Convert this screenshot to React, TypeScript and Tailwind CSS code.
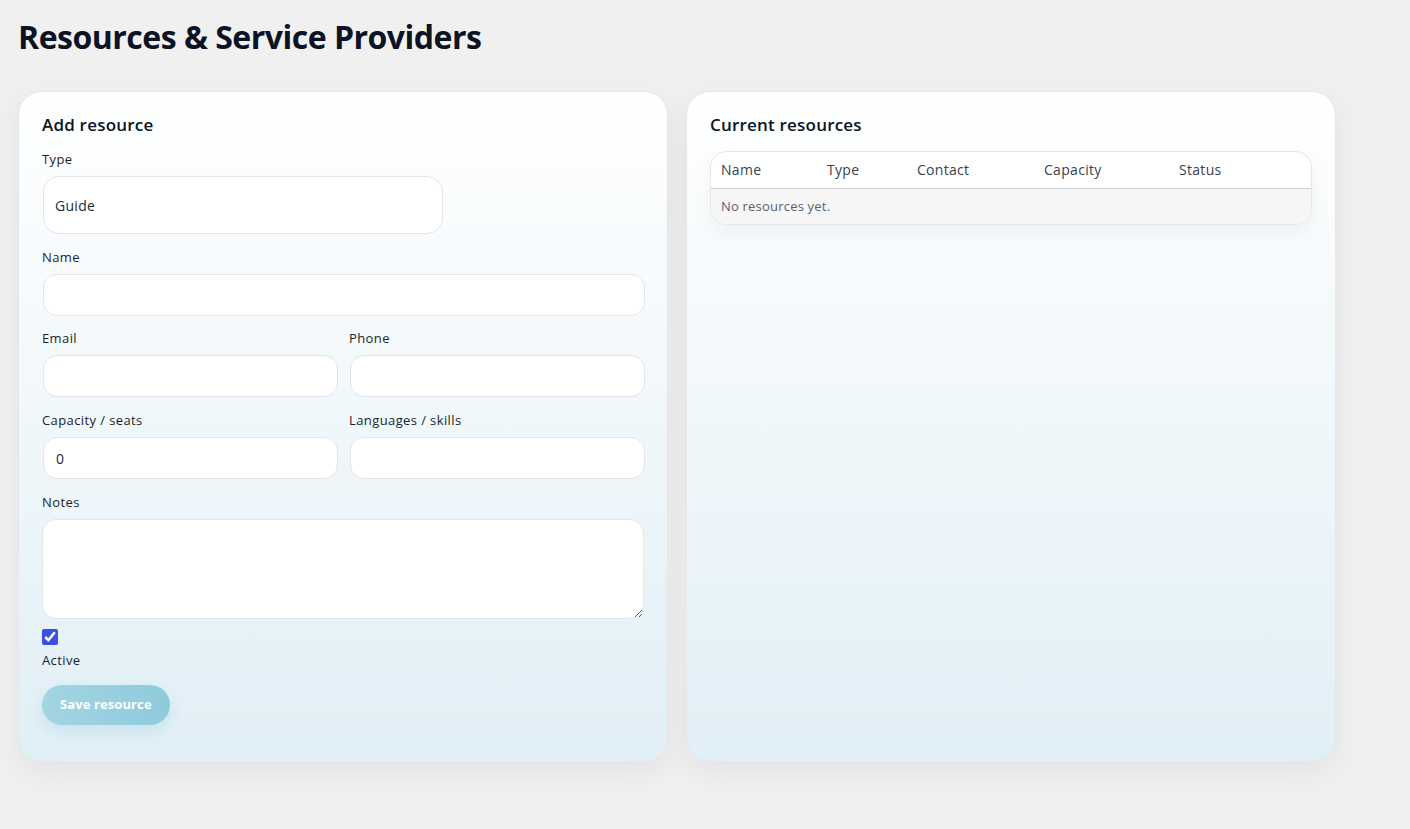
export default function App() {
  const inputCls =
    "block w-full rounded-[14px] border border-[#dfe6ee] bg-white px-3 text-[14px] text-[#1f2937] outline-none";
  const labelCls = "block text-[13px] leading-[20px] tracking-[0.4px] text-[#1a1f2b] mb-[7px]";

  return (
    <div className="min-h-[829px] bg-[#f0f0f0] px-[18px] pt-[17px] font-['Open_Sans',sans-serif] text-[#0f172a]">
      <h1 className="text-[32px] font-bold tracking-[-0.5px] leading-[40px] text-[#0b1324]">
        Resources &amp; Service Providers
      </h1>

      <div className="mt-[34px] flex gap-[18px]">
        {/* Add resource */}
        <section className="w-[650px] h-[671px] rounded-[24px] border border-[#e3e8ee] bg-gradient-to-b from-white to-[#e1eff6] px-[23px] pt-[22px] shadow-[0_10px_30px_rgba(0,0,0,0.06)]">
          <h2 className="text-[17px] font-semibold leading-[22px] tracking-[0.2px] text-[#0b1324]">Add resource</h2>

          <label className={labelCls + " mt-[13px]"}>Type</label>
          <div className="ml-[1px] flex h-[58px] w-[400px] items-center rounded-[16px] border border-[#dfe6ee] bg-white px-[11px] text-[14px] tracking-[0.3px] text-[#1f2937]">
            Guide
          </div>

          <label className={labelCls + " mt-[13px]"}>Name</label>
          <input className={inputCls + " ml-[1px] h-[42px] !w-[602px]"} />

          <div className="ml-[1px] mt-[12px] grid w-[602px] grid-cols-2 gap-x-[12px]">
            <div>
              <label className={labelCls + " -ml-[1px]"}>Email</label>
              <input className={inputCls + " h-[42px]"} />
            </div>
            <div>
              <label className={labelCls + " -ml-[1px]"}>Phone</label>
              <input className={inputCls + " h-[42px]"} />
            </div>
          </div>

          <div className="ml-[1px] mt-[13px] grid w-[602px] grid-cols-2 gap-x-[12px]">
            <div>
              <label className={labelCls + " -ml-[1px]"}>Capacity / seats</label>
              <input className={inputCls + " h-[42px] tracking-[0.3px]"} defaultValue="0" />
            </div>
            <div>
              <label className={labelCls + " -ml-[1px]"}>Languages / skills</label>
              <input className={inputCls + " h-[42px]"} />
            </div>
          </div>

          <label className={labelCls + " mt-[13px] mb-[6px]"}>Notes</label>
          <textarea className="block h-[100px] w-[602px] rounded-[14px] border border-[#dfe6ee] bg-white px-3 py-2 text-[14px] outline-none" />

          <input
            type="checkbox"
            defaultChecked
            className="mt-[10px] block h-[16px] w-[16px] accent-[#3b50e0]"
          />
          <div className="mt-[5px] text-[13px] leading-[20px] tracking-[0.4px] text-[#1a1f2b]">Active</div>

          <button className="mt-[15px] h-[40px] rounded-full bg-gradient-to-r from-[#a3d5e3] to-[#8fcadb] px-[18px] text-[13px] font-bold tracking-[0.1px] text-white shadow-[0_6px_14px_rgba(120,190,210,0.25)]">
            Save resource
          </button>
        </section>

        {/* Current resources */}
        <section className="w-[650px] h-[671px] rounded-[24px] border border-[#e3e8ee] bg-gradient-to-b from-white to-[#e1eff6] px-[23px] pt-[22px] shadow-[0_10px_30px_rgba(0,0,0,0.06)]">
          <h2 className="text-[17px] font-semibold leading-[22px] tracking-[0.2px] text-[#0b1324]">Current resources</h2>

          <div className="mt-[15px] overflow-hidden rounded-[16px] border border-[#e3e8ee] bg-white shadow-[0_8px_20px_rgba(0,0,0,0.05)]">
            <table className="w-full table-fixed border-collapse text-left">
              <thead>
                <tr className="h-[36px] border-b border-[#c9cdd2] text-[14px] tracking-[0.3px] text-[#3a4150]">
                  <th className="w-[106px] pl-[10px] font-normal">Name</th>
                  <th className="w-[90px] pl-[10px] font-normal">Type</th>
                  <th className="w-[127px] pl-[10px] font-normal">Contact</th>
                  <th className="w-[135px] pl-[10px] font-normal">Capacity</th>
                  <th className="pl-[10px] font-normal">Status</th>
                </tr>
              </thead>
              <tbody>
                <tr className="h-[36px] bg-[#f6f6f6]">
                  <td colSpan={5} className="pl-[10px] text-[13px] tracking-[0.2px] text-[#5b6270]">
                    No resources yet.
                  </td>
                </tr>
              </tbody>
            </table>
          </div>
        </section>
      </div>
    </div>
  );
}
